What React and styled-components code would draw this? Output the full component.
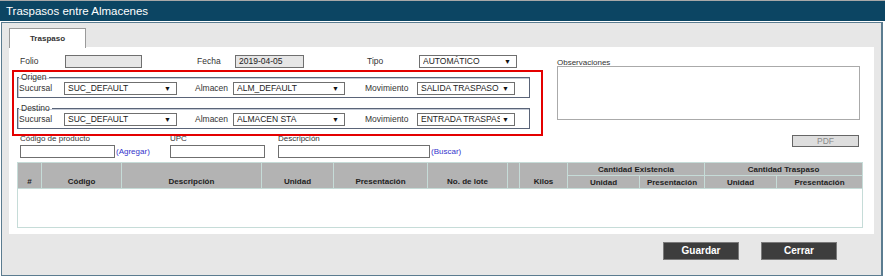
import React from "react";
import styled, { createGlobalStyle } from "styled-components";

const Global = createGlobalStyle`
  body {
    margin: 0;
    background: #fff;
    font-family: "Liberation Sans", Arial, sans-serif;
    color: #222;
  }
`;

const TitleBar = styled.div`
  height: 20px;
  border-top: 1px solid #a8a8a8;
  background: #0c4563;
  color: #fff;
  font-size: 11.5px;
  line-height: 20px;
  padding-left: 6px;
`;

const Frame = styled.div`
  margin: 1px 0 0 1px;
  width: 865px;
  height: 247px;
  border: 1px solid #5b7c90;
  border-right-width: 2px;
  background: #e7e7e7;
  padding: 5px 7px 0 7px;
`;

const Tab = styled.div`
  width: 75px;
  height: 19px;
  border: 1px solid #9a9a9a;
  border-bottom: none;
  background: #fff;
  font-size: 8px;
  font-weight: bold;
  color: #333;
  text-align: center;
  line-height: 19px;
  position: relative;
  z-index: 1;
  margin-bottom: -1px;
`;

const Panel = styled.div`
  background: #fff;
  height: 187px;
  box-sizing: border-box;
  padding: 0 0 7px 0;
`;

const TopArea = styled.div`
  display: flex;
  height: 89px;
`;

const LeftCol = styled.div`
  width: 533px;
`;

const RightCol = styled.div`
  padding: 10px 0 0 15px;
  display: flex;
  flex-direction: column;
`;

const Row = styled.div`
  display: flex;
  align-items: center;
  height: 13px;
  padding-left: ${(p) => p.$indent || 0}px;
  margin-top: ${(p) => p.$top || 0}px;
`;

const Label = styled.span`
  width: ${(p) => p.$w}px;
  margin-left: ${(p) => p.$gap || 0}px;
  font-size: 8.5px;
  color: #333;
  flex-shrink: 0;
  position: relative;
  top: -1px;
  white-space: nowrap;
`;

const Box = styled.div`
  width: ${(p) => p.$w}px;
  height: 13px;
  box-sizing: border-box;
  border: 1px solid #6f6f6f;
  background: ${(p) => (p.$ro ? "#e6e6e6" : "#fff")};
  font-size: 8.5px;
  line-height: 11px;
  color: #222;
  padding-left: 3px;
  display: flex;
  align-items: center;
  flex-shrink: 0;
  white-space: nowrap;
  overflow: hidden;
`;

const Value = styled.span`
  flex: 1;
  overflow: hidden;
`;

const Arrow = styled.span`
  font-size: 7px;
  padding: 0 5px 0 2px;
  color: #111;
`;

const RedBox = styled.div`
  margin: 2px 0 0 3px;
  width: 524px;
  height: 62px;
  border: 2px solid #e40000;
  padding: 0 0 0 3px;
`;

const FieldSet = styled.fieldset`
  margin: ${(p) => p.$top}px 0 0 0;
  padding: 0 0 4px 0;
  width: 513px;
  height: 25px;
  box-sizing: border-box;
  border: 1px solid #5a6478;
  box-shadow: inset 1px 1px 0 #c4cad6;
  legend {
    font-size: 8.5px;
    color: #333;
    padding: 0 2px;
    margin-left: 1px;
    line-height: 9px;
  }
`;

const ObsLabel = styled.span`
  font-size: 8px;
  color: #333;
  line-height: 11px;
  margin-bottom: -2px;
`;

const TextArea = styled.div`
  width: 303px;
  height: 54px;
  box-sizing: border-box;
  border: 1px solid #aaa;
  background: #fff;
`;

const SearchRow = styled.div`
  display: flex;
  margin-top: -3px;
  padding-left: 11px;
  height: 25px;
`;

const Group = styled.div`
  display: flex;
  flex-direction: column;
  width: ${(p) => (p.$w ? `${p.$w}px` : "auto")};
  flex-shrink: 0;
`;

const SmallLabel = styled.span`
  font-size: 8px;
  color: #333;
  line-height: 12px;
  height: 12px;
`;

const Input = styled.div`
  display: flex;
  align-items: center;
  gap: 1px;
  & > div {
    width: ${(p) => p.$w}px;
    height: 13px;
    box-sizing: border-box;
    border: 1px solid #6f6f6f;
    background: #fff;
  }
`;

const Link = styled.span`
  font-size: 8px;
  color: #3333cc;
`;

const PdfButton = styled.div`
  margin: 2px 15px 0 auto;
  width: 67px;
  height: 12px;
  box-sizing: border-box;
  border: 1px solid #666;
  background: #dedede;
  color: #8a8a8a;
  font-size: 8.5px;
  line-height: 10px;
  text-align: center;
`;

const Grid = styled.table`
  margin: 4px 0 0 8px;
  width: 845px;
  border-collapse: collapse;
  table-layout: fixed;
  th {
    background: #b3b3b3;
    border: 1px solid #c6dcd8;
    font-size: 8px;
    font-weight: bold;
    color: #222;
    height: 12px;
    padding: 0;
    line-height: 11px;
    white-space: nowrap;
  }
  th[rowspan] {
    vertical-align: bottom;
    padding-bottom: 1px;
  }
  td {
    height: 38px;
    border: 1px solid #c6dcd8;
    padding: 0;
  }
`;

const Buttons = styled.div`
  display: flex;
  justify-content: flex-end;
  gap: 22px;
  margin: 8px 37px 0 0;
`;

const Button = styled.div`
  width: 76px;
  height: 18px;
  box-sizing: border-box;
  border: 1px solid #7a7a7a;
  background: #3d3d3d;
  color: #fff;
  font-size: 10px;
  font-weight: bold;
  line-height: 16px;
  text-align: center;
`;

function Select({ w, value }) {
  return (
    <Box $w={w}>
      <Value>{value}</Value>
      <Arrow>▼</Arrow>
    </Box>
  );
}

function LocRow({ sucursal, almacen, movimiento }) {
  return (
    <Row $indent={1}>
      <Label $w={45}>Sucursal</Label>
      <Select w={113} value={sucursal} />
      <Label $w={38} $gap={18}>Almacen</Label>
      <Select w={112} value={almacen} />
      <Label $w={52} $gap={20}>Movimiento</Label>
      <Select w={98} value={movimiento} />
    </Row>
  );
}

const cols = [24, 80, 140, 72, 94, 80, 12, 48, 72, 65, 72, 86];

export default function App() {
  return (
    <>
      <Global />
      <TitleBar>Traspasos entre Almacenes</TitleBar>
      <Frame>
        <Tab>Traspaso</Tab>
        <Panel>
          <TopArea>
            <LeftCol>
              <Row $indent={11} $top={8}>
                <Label $w={45}>Folio</Label>
                <Box $w={77} $ro />
                <Label $w={38} $gap={55}>Fecha</Label>
                <Box $w={69} $ro>2019-04-05</Box>
                <Label $w={52} $gap={63}>Tipo</Label>
                <Select w={98} value="AUTOMÁTICO" />
              </Row>
              <RedBox>
                <FieldSet $top={1}>
                  <legend>Origen</legend>
                  <LocRow sucursal="SUC_DEFAULT" almacen="ALM_DEFAULT" movimiento="SALIDA TRASPASO" />
                </FieldSet>
                <FieldSet $top={6}>
                  <legend>Destino</legend>
                  <LocRow sucursal="SUC_DEFAULT" almacen="ALMACEN STA" movimiento="ENTRADA TRASPASO" />
                </FieldSet>
              </RedBox>
            </LeftCol>
            <RightCol>
              <ObsLabel>Observaciones</ObsLabel>
              <TextArea />
            </RightCol>
          </TopArea>
          <SearchRow>
            <Group $w={150}>
              <SmallLabel>Código de producto</SmallLabel>
              <Input $w={95}>
                <div />
                <Link>(Agregar)</Link>
              </Input>
            </Group>
            <Group $w={108}>
              <SmallLabel>UPC</SmallLabel>
              <Input $w={95}>
                <div />
              </Input>
            </Group>
            <Group>
              <SmallLabel>Descripción</SmallLabel>
              <Input $w={152}>
                <div />
                <Link>(Buscar)</Link>
              </Input>
            </Group>
            <PdfButton>PDF</PdfButton>
          </SearchRow>
          <Grid>
            <colgroup>
              {cols.map((w, i) => (
                <col key={i} style={{ width: w }} />
              ))}
            </colgroup>
            <thead>
              <tr>
                <th rowSpan={2}>#</th>
                <th rowSpan={2}>Código</th>
                <th rowSpan={2}>Descripción</th>
                <th rowSpan={2}>Unidad</th>
                <th rowSpan={2}>Presentación</th>
                <th rowSpan={2}>No. de lote</th>
                <th rowSpan={2}></th>
                <th rowSpan={2}>Kilos</th>
                <th colSpan={2}>Cantidad Existencia</th>
                <th colSpan={2}>Cantidad Traspaso</th>
              </tr>
              <tr>
                <th>Unidad</th>
                <th>Presentación</th>
                <th>Unidad</th>
                <th>Presentación</th>
              </tr>
            </thead>
            <tbody>
              <tr>
                <td colSpan={12}></td>
              </tr>
            </tbody>
          </Grid>
        </Panel>
        <Buttons>
          <Button>Guardar</Button>
          <Button>Cerrar</Button>
        </Buttons>
      </Frame>
    </>
  );
}
